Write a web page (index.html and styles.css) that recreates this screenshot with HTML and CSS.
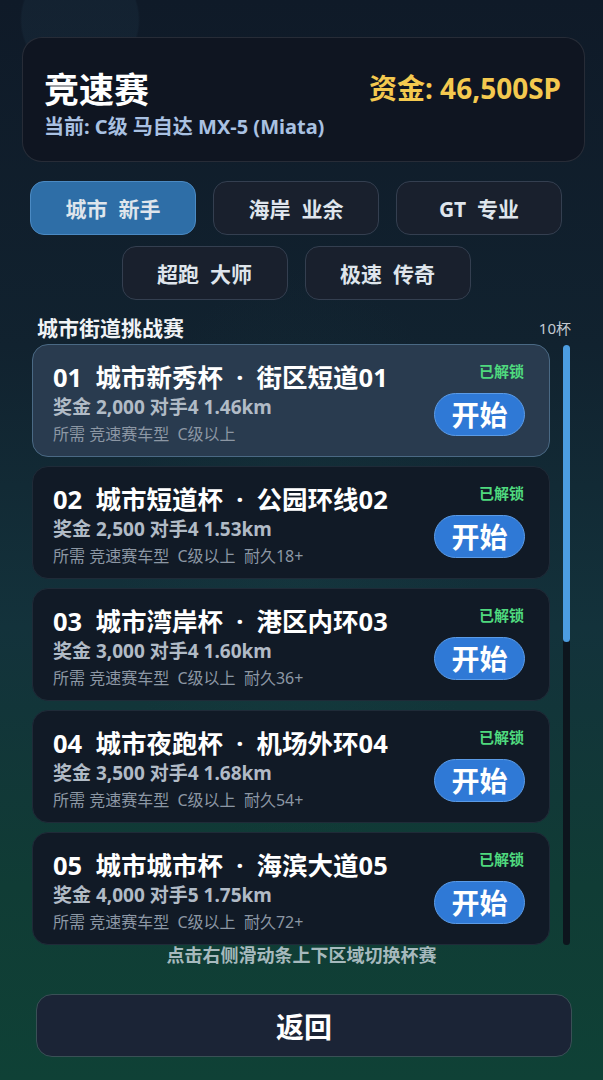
FILE: index.html
```html
<!DOCTYPE html>
<html lang="zh-CN">
<head>
<meta charset="UTF-8">
<meta name="viewport" content="width=device-width, initial-scale=1.0">
<title>竞速赛</title>
<link rel="stylesheet" href="styles.css">
</head>
<body>
<div class="page">
  <div class="header">
    <div class="header-left">
      <h1 class="title">竞速赛</h1>
      <div class="current">当前: C级 马自达 MX-5 (Miata)</div>
    </div>
    <div class="money">资金: 46,500SP</div>
  </div>

  <div class="tabs">
    <button class="tab active">城市&nbsp; 新手</button>
    <button class="tab">海岸&nbsp; 业余</button>
    <button class="tab">GT&nbsp; 专业</button>
    <button class="tab">超跑&nbsp; 大师</button>
    <button class="tab">极速&nbsp; 传奇</button>
  </div>

  <div class="section-head">
    <span class="section-title">城市街道挑战赛</span>
    <span class="section-count">10杯</span>
  </div>

  <div class="list-wrap">
    <div class="cups">
      <div class="cup selected">
        <div class="cup-info">
          <div class="cup-name">01&nbsp; 城市新秀杯 &nbsp;·&nbsp; 街区短道01</div>
          <div class="cup-stats">奖金 2,000 对手4 1.46km</div>
          <div class="cup-req">所需 竞速赛车型&nbsp; C级以上</div>
        </div>
        <div class="cup-side">
          <span class="status">已解锁</span>
          <button class="start">开始</button>
        </div>
      </div>
      <div class="cup">
        <div class="cup-info">
          <div class="cup-name">02&nbsp; 城市短道杯 &nbsp;·&nbsp; 公园环线02</div>
          <div class="cup-stats">奖金 2,500 对手4 1.53km</div>
          <div class="cup-req">所需 竞速赛车型&nbsp; C级以上&nbsp; 耐久18+</div>
        </div>
        <div class="cup-side">
          <span class="status">已解锁</span>
          <button class="start">开始</button>
        </div>
      </div>
      <div class="cup">
        <div class="cup-info">
          <div class="cup-name">03&nbsp; 城市湾岸杯 &nbsp;·&nbsp; 港区内环03</div>
          <div class="cup-stats">奖金 3,000 对手4 1.60km</div>
          <div class="cup-req">所需 竞速赛车型&nbsp; C级以上&nbsp; 耐久36+</div>
        </div>
        <div class="cup-side">
          <span class="status">已解锁</span>
          <button class="start">开始</button>
        </div>
      </div>
      <div class="cup">
        <div class="cup-info">
          <div class="cup-name">04&nbsp; 城市夜跑杯 &nbsp;·&nbsp; 机场外环04</div>
          <div class="cup-stats">奖金 3,500 对手4 1.68km</div>
          <div class="cup-req">所需 竞速赛车型&nbsp; C级以上&nbsp; 耐久54+</div>
        </div>
        <div class="cup-side">
          <span class="status">已解锁</span>
          <button class="start">开始</button>
        </div>
      </div>
      <div class="cup">
        <div class="cup-info">
          <div class="cup-name">05&nbsp; 城市城市杯 &nbsp;·&nbsp; 海滨大道05</div>
          <div class="cup-stats">奖金 4,000 对手5 1.75km</div>
          <div class="cup-req">所需 竞速赛车型&nbsp; C级以上&nbsp; 耐久72+</div>
        </div>
        <div class="cup-side">
          <span class="status">已解锁</span>
          <button class="start">开始</button>
        </div>
      </div>
    </div>
    <div class="scrollbar">
      <div class="thumb"></div>
    </div>
  </div>

  <div class="hint">点击右侧滑动条上下区域切换杯赛</div>

  <button class="back">返回</button>
</div>
</body>
</html>
```

FILE: styles.css
```css
body {
  margin: 0;
  padding: 0;
  font-family: "Noto Sans", "Noto Sans CJK SC", sans-serif;
  color: #fff;
  background-color: #0f1b29;
  background-image:
    radial-gradient(circle at 80px 20px, rgba(40, 70, 90, 0.18) 0, rgba(40, 70, 90, 0.18) 58px, transparent 60px),
    radial-gradient(ellipse 260px 420px at 300px 560px, rgba(30, 80, 80, 0.16), transparent 70%),
    linear-gradient(180deg, #0f1a28 0%, #11222f 32%, #13323b 58%, #103c35 82%, #0f4136 100%);
  min-height: 1080px;
  overflow: hidden;
}
.page {
  width: 603px;
}
.header {
  margin: 37px 18px 0 22px;
  height: 125px;
  box-sizing: border-box;
  padding: 33px 23px 0 21px;
  background-color: #0f1521;
  border: 1px solid rgba(255, 255, 255, 0.1);
  border-radius: 20px;
  display: flex;
  justify-content: space-between;
  align-items: flex-start;
}
.title {
  margin: 0;
  font-size: 35px;
  line-height: 38px;
  font-weight: 700;
}
.current {
  margin-top: 7px;
  font-size: 20px;
  line-height: 22px;
  font-weight: 700;
  color: #a9c1e2;
}
.money {
  margin-top: 1px;
  font-size: 28px;
  line-height: 32px;
  font-weight: 700;
  color: #f4c94f;
}
.tabs {
  margin: 19px 33px 0 22px;
  display: flex;
  flex-wrap: wrap;
  justify-content: center;
  gap: 11px 17px;
}
.tab {
  width: 166px;
  height: 54px;
  border-radius: 14px;
  border: 1px solid #343f50;
  background-color: #19202d;
  color: #dfe5ec;
  font-family: inherit;
  font-size: 21px;
  font-weight: 700;
  cursor: pointer;
}
.tab.active {
  background-color: #2e6ea7;
  border-color: #4b8ac3;
}
.section-head {
  margin: 17px 32px 0 37px;
  height: 22px;
  display: flex;
  justify-content: space-between;
  align-items: center;
}
.section-title {
  font-size: 21px;
  line-height: 22px;
  font-weight: 700;
  color: #f0f3f6;
}
.section-count {
  font-size: 15px;
  line-height: 18px;
  color: #c3cad2;
}
.list-wrap {
  margin: 5px 0 0 32px;
  display: flex;
  gap: 13px;
}
.cups {
  width: 518px;
  display: flex;
  flex-direction: column;
  gap: 9px;
}
.cup {
  height: 113px;
  box-sizing: border-box;
  padding: 17px 24px 0 20px;
  background-color: #111a26;
  border: 1px solid #1f2b38;
  border-radius: 16px;
  display: flex;
  justify-content: space-between;
}
.cup.selected {
  background-color: #293b4f;
  border-color: #4a6984;
}
.cup-name {
  font-size: 25.5px;
  line-height: 30px;
  font-weight: 700;
  white-space: nowrap;
}
.cup-stats {
  margin-top: 4px;
  font-size: 19px;
  line-height: 22px;
  font-weight: 700;
  color: #b1bbc6;
}
.cup-req {
  margin-top: 6px;
  font-size: 16px;
  line-height: 20px;
  color: #8c97a4;
  white-space: nowrap;
}
.cup-side {
  display: flex;
  flex-direction: column;
  align-items: flex-end;
}
.status {
  font-size: 15px;
  line-height: 18px;
  font-weight: 700;
  color: #4fd97e;
  margin-right: 1px;
}
.start {
  margin-top: 13px;
  width: 91px;
  height: 43px;
  border-radius: 22px;
  border: 1.5px solid #5b9be6;
  background-color: #2f79d6;
  color: #fff;
  font-family: inherit;
  font-size: 28px;
  line-height: 1;
  font-weight: 700;
  padding: 0;
  cursor: pointer;
}
.scrollbar {
  margin-top: 1px;
  width: 7px;
  height: 600px;
  border-radius: 4px;
  background-color: #0d151d;
}
.thumb {
  height: 297px;
  border-radius: 4px;
  background-color: #4c9de1;
}
.hint {
  text-align: center;
  font-size: 18px;
  line-height: 20px;
  font-weight: 700;
  color: #a6b9bd;
}
.back {
  display: block;
  margin: 29px 31px 0 36px;
  width: 536px;
  height: 63px;
  border-radius: 16px;
  border: 1.5px solid #3a5056;
  background-color: #1b2436;
  color: #fff;
  font-family: inherit;
  font-size: 28px;
  font-weight: 700;
  cursor: pointer;
}
```
